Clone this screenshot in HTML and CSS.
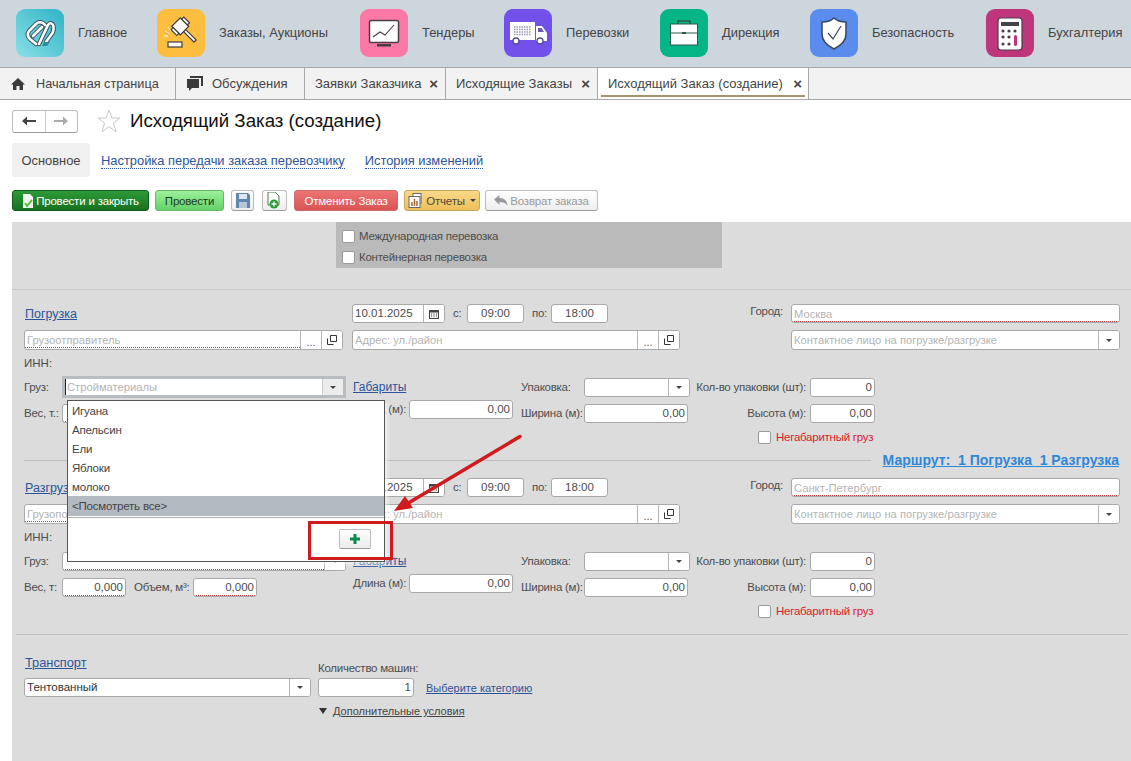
FILE: index.html
```html
<!DOCTYPE html>
<html lang="ru">
<head>
<meta charset="utf-8">
<title>Исходящий Заказ (создание)</title>
<link rel="stylesheet" href="styles.css">
</head>
<body>
<div class="page">
<nav class="apps">
  <a class="app"><svg class="app-ico" viewBox="0 0 48 48"><defs><linearGradient id="g1" x1="0" y1="1" x2="1" y2="0"><stop offset="0" stop-color="#8adfe6"/><stop offset="1" stop-color="#2fb4c6"/></linearGradient></defs><rect width="48" height="48" rx="9" fill="url(#g1)"/><path d="M29 16C26 12 22 13 20 15L13 22C11 25 12 28 14 30L20 35M17 27L26 18M23 35L32 16C34 13 37 14 37.500 18C38 22 37 24 35 26L30 33" fill="none" stroke="#37505c" stroke-width="4.500" stroke-linecap="round"/><path d="M29 16C26 12 22 13 20 15L13 22C11 25 12 28 14 30L20 35M17 27L26 18M23 35L32 16C34 13 37 14 37.500 18C38 22 37 24 35 26L30 33" fill="none" stroke="#fff" stroke-width="2.600" stroke-linecap="round"/><path d="M28 33h6l-3 4h-5z" fill="#2b8c9b"/></svg><span>Главное</span></a>
  <a class="app"><svg class="app-ico" viewBox="0 0 48 48"><rect width="48" height="48" rx="9" fill="#fdbe3f"/><g transform="rotate(-45 24 18)" stroke="#3d3d3d" stroke-width="1.200" fill="#fff"><rect x="22.500" y="23" width="3" height="15"/><rect x="18" y="11" width="12" height="12"/><rect x="15" y="13" width="3" height="8"/><rect x="30" y="13" width="3" height="8"/></g><rect x="11" y="33" width="14" height="5" fill="#fff" stroke="#3d3d3d" stroke-width="1.200"/><path d="M7 27h4M8 22l4 2.500M11 18l2.500 3.500" stroke="#fff" stroke-width="1"/></svg><span>Заказы, Аукционы</span></a>
  <a class="app"><svg class="app-ico" viewBox="0 0 48 48"><rect width="48" height="48" rx="9" fill="#fc78a6"/><rect x="9.500" y="11.500" width="29" height="22" rx="1.500" fill="#fff" stroke="#4b3b47" stroke-width="1.500"/><path d="M13 28l7-5 5 3 9-10" fill="none" stroke="#4b3b47" stroke-width="1.100"/><rect x="17" y="35" width="14" height="2.500" fill="#4b3b47"/></svg><span>Тендеры</span></a>
  <a class="app"><svg class="app-ico" viewBox="0 0 48 48"><rect width="48" height="48" rx="9" fill="#7250ea"/><rect x="6" y="13" width="25" height="18" fill="#fff"/><path d="M32 17h6l5 7v8H32z" fill="#fff"/><path d="M34 19h3.500l2.500 4h-6z" fill="#6a5aa8"/><path d="M10 18h17M10 20.500h17M10 23h17M10 25.500h17" stroke="#9c96b2" stroke-width="1.600" stroke-dasharray="1.500 1"/><circle cx="12" cy="32" r="3" fill="#fff" stroke="#56489a" stroke-width="1.300"/><circle cx="36" cy="32" r="3" fill="#fff" stroke="#56489a" stroke-width="1.300"/></svg><span>Перевозки</span></a>
  <a class="app"><svg class="app-ico" viewBox="0 0 48 48"><rect width="48" height="48" rx="9" fill="#06b585"/><path d="M18 15v-3h12v3" fill="none" stroke="#2d5a4c" stroke-width="1.500"/><rect x="10.500" y="15" width="27" height="21" fill="#fff" stroke="#2d5a4c" stroke-width="1"/><path d="M10.500 24h27" stroke="#2d5a4c"/><rect x="22" y="23" width="4" height="2" fill="#2d5a4c"/></svg><span>Дирекция</span></a>
  <a class="app"><svg class="app-ico" viewBox="0 0 48 48"><rect width="48" height="48" rx="9" fill="#5a8cee"/><path d="M24 9c3 3 8 4 12 4v12c0 8-6 12-12 15-6-3-12-7-12-15V13c4 0 9-1 12-4z" fill="#fff" stroke="#39465e" stroke-width="1.500"/><path d="M18 24l5 6 8-13" fill="none" stroke="#39465e" stroke-width="1.200"/></svg><span>Безопасность</span></a>
  <a class="app"><svg class="app-ico" viewBox="0 0 48 48"><rect width="48" height="48" rx="9" fill="#c0367c"/><rect x="12" y="9" width="24" height="32" rx="3" fill="#fff" stroke="#46424a" stroke-width="1.200"/><rect x="15" y="13" width="18" height="4" fill="#46424a"/><g fill="#46424a"><circle cx="17" cy="22" r="1.600"/><circle cx="23" cy="22" r="1.600"/><circle cx="29" cy="22" r="1.600"/><circle cx="17" cy="28" r="1.600"/><circle cx="23" cy="28" r="1.600"/><circle cx="17" cy="35" r="1.600"/><circle cx="23" cy="35" r="1.600"/></g><rect x="28" y="26" width="3" height="11" rx="1.500" fill="#c0367c"/></svg><span>Бухгалтерия</span></a>
</nav>

<div class="tabs">
  <a class="tab tab-home"><svg class="tab-ico-home" viewBox="0 0 14 12"><path d="M7 0L0 6.500h2V12h3.500V8h3v4H12V6.500h2z" fill="#3a3a3a"/></svg><span>Начальная страница</span></a>
  <a class="tab tab-talk"><svg class="tab-ico-talk" viewBox="0 0 18 16"><path d="M4 0h13v10h-2V2H4z" fill="#3a3a3a"/><path d="M1 3h12v9H6l-3 3v-3H1z" fill="#3a3a3a"/></svg><span>Обсуждения</span></a>
  <a class="tab tab-a"><span>Заявки Заказчика</span><b class="x">×</b></a>
  <a class="tab tab-b"><span>Исходящие Заказы</span><b class="x">×</b></a>
  <a class="tab tab-c"><span>Исходящий Заказ (создание)</span><b class="x">×</b></a>
</div>

<header class="head">
  <div class="navbtns">
    <span class="navbtn"><svg viewBox="0 0 14 10" width="14" height="10"><path d="M0 5l5-4.500V4h9v2H5v3.500z" fill="#444"/></svg></span>
    <span class="navbtn"><svg viewBox="0 0 14 10" width="14" height="10"><path d="M14 5L9 .5V4H0v2h9v3.500z" fill="#aaa"/></svg></span>
  </div>
  <svg class="star" viewBox="0 0 24 24"><path d="M12 1l3 8h8l-6.500 5 2.500 9-7-5.500L5 23l2.500-9L1 9h8z" fill="#fff" stroke="#c8c8c8"/></svg>
  <h1 class="title">Исходящий Заказ (создание)</h1>
</header>

<div class="subtabs">
  <span class="subtab-on">Основное</span>
  <a class="subtab subtab-1">Настройка передачи заказа перевозчику</a>
  <a class="subtab subtab-2">История изменений</a>
</div>

<div class="toolbar">
  <button class="btn btn-dark w-close"><svg width="12" height="14" viewBox="0 0 12 14"><path d="M1 0h7l3 3v11H1z" fill="#f4f4f4"/><path d="M3 9l2 3 5-6" stroke="#5fbf3f" stroke-width="2" fill="none"/></svg>Провести и закрыть</button>
  <button class="btn btn-green w-post">Провести</button>
  <button class="btn btn-plain w-save"><svg width="14" height="15" viewBox="0 0 14 15"><path d="M0 0h12l2 2v13H0z" fill="#5f86ad"/><rect x="3" y="1" width="8" height="5" fill="#dfe8f0"/><rect x="3" y="9" width="8" height="6" fill="#b7c6d4"/></svg></button>
  <button class="btn btn-plain w-new"><svg width="15" height="17" viewBox="0 0 15 17"><path d="M1 0h7l4 4v9H1z" fill="#fff" stroke="#4d7d4d"/><circle cx="7" cy="12" r="4.500" fill="#2e9a3e"/><path d="M7 9.500v5M4.500 12h5" stroke="#fff" stroke-width="1.300"/></svg></button>
  <button class="btn btn-red w-cancel">Отменить Заказ</button>
  <button class="btn btn-orange w-rep"><svg width="17" height="15" viewBox="0 0 17 15"><rect x="5" y="0.500" width="8" height="10" fill="#fff" stroke="#666"/><rect x="1" y="3.500" width="11" height="11" fill="#fff" stroke="#666"/><path d="M4 13V9M6.500 13V6M9 13V8" stroke="#a8642a" stroke-width="1.500"/></svg>Отчеты<i class="caret"></i></button>
  <button class="btn btn-off w-back"><svg width="14" height="11" viewBox="0 0 14 11"><path d="M0 4.500L5.500 0v3c5 0 8 3 8 8-1.500-3-4-4-8-4v3z" fill="#9a9a9a"/></svg>Возврат заказа</button>
</div>

<main class="form">
  <div class="flags">
    <label class="check"><i class="box"></i>Международная перевозка</label>
    <label class="check"><i class="box"></i>Контейнерная перевозка</label>
  </div>
  <hr class="rule rule-top">

  <section class="stop">
    <div class="r-date">
      <a class="link">Погрузка</a>
      <div class="field"><span class="val">10.01.2025</span><span class="fbtn"><svg class="cal" viewBox="0 0 10 10"><path d="M0 1h10v9H0z" fill="#444"/><path d="M1 3.500h8V9H1z" fill="#eee"/><path d="M2 5h1M4.500 5h1M7 5h1M2 7h1M4.500 7h1M7 7h1" stroke="#444"/></svg></span></div>
      <span class="lab lab-c">с:</span>
      <div class="field"><span class="val center">09:00</span></div>
      <span class="lab lab-c">по:</span>
      <div class="field"><span class="val center">18:00</span></div>
      <span class="lab lab-city">Город:</span>
      <div class="field"><span class="val ph req">Москва</span></div>
    </div>
    <div class="r-party">
      <div class="field"><span class="val ph req">Грузоотправитель</span><span class="fbtn dots">...</span><span class="fbtn"><svg class="open" viewBox="0 0 10 10"><path d="M3.500.5h6v6h-6zM.5 3.500v6h6" fill="none" stroke="#333"/></svg></span></div>
      <div class="field"><span class="val ph">Адрес: ул./район</span><span class="fbtn dots">...</span><span class="fbtn"><svg class="open" viewBox="0 0 10 10"><path d="M3.500.5h6v6h-6zM.5 3.500v6h6" fill="none" stroke="#333"/></svg></span></div>
      <div class="field contact"><span class="val ph">Контактное лицо на погрузке/разгрузке</span><span class="fbtn"><i class="caret"></i></span></div>
    </div>
    <div class="r-inn">ИНН:</div>
    <div class="cargo">
      <div class="c-left">
        <div class="c-load"><span class="lab">Груз:</span><div class="field focus"><span class="val ph req">Стройматериалы</span><span class="fbtn"><i class="caret"></i></span></div></div>
        <div class="c-weight"><span class="lab">Вес, т.:</span><div class="field"><span class="val right req">0,000</span></div><span class="lab lab-vol">Объем, м³:</span><div class="field"><span class="val right req">0,000</span></div></div>
      </div>
      <div class="c-mid">
        <a class="link">Габариты</a>
        <div class="c-len"><span class="lab">Длина (м):</span><div class="field"><span class="val right">0,00</span></div></div>
      </div>
      <div class="c-right">
        <span class="lab">Упаковка:</span><div class="field"><span class="val"></span><span class="fbtn"><i class="caret"></i></span></div><span class="lab lab-r">Кол-во упаковки (шт):</span><div class="field"><span class="val right">0</span></div>
        <span class="lab">Ширина (м):</span><div class="field narrow"><span class="val right">0,00</span></div><span class="lab lab-r">Высота (м):</span><div class="field"><span class="val right">0,00</span></div>
      </div>
    </div>
    <label class="check over"><i class="box"></i>Негабаритный груз</label>
  </section>

  <div class="route"><hr class="rule"><a class="route-link">Маршрут:&nbsp; 1 Погрузка&nbsp; 1 Разгрузка</a></div>

  <section class="stop">
    <div class="r-date">
      <a class="link">Разгрузка</a>
      <div class="field"><span class="val">10.01.2025</span><span class="fbtn"><svg class="cal" viewBox="0 0 10 10"><path d="M0 1h10v9H0z" fill="#444"/><path d="M1 3.500h8V9H1z" fill="#eee"/><path d="M2 5h1M4.500 5h1M7 5h1M2 7h1M4.500 7h1M7 7h1" stroke="#444"/></svg></span></div>
      <span class="lab lab-c">с:</span>
      <div class="field"><span class="val center">09:00</span></div>
      <span class="lab lab-c">по:</span>
      <div class="field"><span class="val center">18:00</span></div>
      <span class="lab lab-city">Город:</span>
      <div class="field"><span class="val ph req">Санкт-Петербург</span></div>
    </div>
    <div class="r-party">
      <div class="field"><span class="val ph req">Грузополучатель</span><span class="fbtn dots">...</span><span class="fbtn"><svg class="open" viewBox="0 0 10 10"><path d="M3.500.5h6v6h-6zM.5 3.500v6h6" fill="none" stroke="#333"/></svg></span></div>
      <div class="field"><span class="val ph">Адрес: ул./район</span><span class="fbtn dots">...</span><span class="fbtn"><svg class="open" viewBox="0 0 10 10"><path d="M3.500.5h6v6h-6zM.5 3.500v6h6" fill="none" stroke="#333"/></svg></span></div>
      <div class="field contact"><span class="val ph">Контактное лицо на погрузке/разгрузке</span><span class="fbtn"><i class="caret"></i></span></div>
    </div>
    <div class="r-inn">ИНН:</div>
    <div class="cargo">
      <div class="c-left">
        <div class="c-load"><span class="lab">Груз:</span><div class="field"><span class="val ph req"></span><span class="fbtn"><i class="caret"></i></span></div></div>
        <div class="c-weight"><span class="lab">Вес, т:</span><div class="field"><span class="val right req">0,000</span></div><span class="lab lab-vol">Объем, м³:</span><div class="field"><span class="val right req">0,000</span></div></div>
      </div>
      <div class="c-mid">
        <a class="link">Габариты</a>
        <div class="c-len"><span class="lab">Длина (м):</span><div class="field"><span class="val right">0,00</span></div></div>
      </div>
      <div class="c-right">
        <span class="lab">Упаковка:</span><div class="field"><span class="val"></span><span class="fbtn"><i class="caret"></i></span></div><span class="lab lab-r">Кол-во упаковки (шт):</span><div class="field"><span class="val right">0</span></div>
        <span class="lab">Ширина (м):</span><div class="field narrow"><span class="val right">0,00</span></div><span class="lab lab-r">Высота (м):</span><div class="field"><span class="val right">0,00</span></div>
      </div>
    </div>
    <label class="check over"><i class="box"></i>Негабаритный груз</label>
  </section>

  <hr class="rule rule-end">

  <section class="transport">
    <div class="t-left">
      <a class="link">Транспорт</a>
      <div class="field"><span class="val dark">Тентованный</span><span class="fbtn"><i class="caret"></i></span></div>
    </div>
    <div class="t-right">
      <span class="lab t-label">Количество машин:</span>
      <div class="t-count"><div class="field"><span class="val right">1</span></div><a class="link link-s">Выберите категорию</a></div>
      <a class="more"><i class="tri"></i><span>Дополнительные условия</span></a>
    </div>
  </section>
</main>

<div class="menu">
  <ul class="menu-list">
    <li>Игуана</li><li>Апельсин</li><li>Ели</li><li>Яблоки</li><li>молоко</li><li class="sel">&lt;Посмотреть все&gt;</li>
  </ul>
  <div class="menu-foot"><button class="plus"><svg width="12" height="12" viewBox="0 0 12 12"><path d="M4.500 1h3v3.500H11v3H7.500V11h-3V7.500H1v-3h3.500z" fill="#0d8a4b"/></svg></button></div>
</div>
<div class="mark"></div>
<svg class="arrow" viewBox="0 0 145 90"><path d="M135 5.500L20 74" stroke="#cf1b1e" stroke-width="3.500" fill="none" stroke-linecap="round"/><path d="M9 80l11-15 8 12z" fill="#cf1b1e"/></svg>
</div>
</body>
</html>
```
FILE: styles.css
```css
* { box-sizing: border-box; }
html, body { margin: 0; padding: 0; }
body { font-family: "Liberation Sans", Arial, sans-serif; font-size: 12px; color: #4d4d4d; background: #fff; }
.page { position: relative; width: 1131px; height: 761px; overflow: hidden; }

/* top application bar */
.apps { display: grid; grid-template-columns: 141px 203px 144px 156px 150px 176px auto; height: 68px; padding: 9px 0 0 16px; background: #cdd5dd; border-bottom: 1px solid #a9a9a9; }
.app { display: flex; align-items: flex-start; gap: 14px; }
.app span { font-size: 12.900px; line-height: 48px; color: #444; white-space: nowrap; }
.app-ico { width: 48px; height: 48px; flex: none; }

/* open-window tabs */
.tabs { display: flex; height: 32px; background: #f2f2f2; border-bottom: 1px solid #a9a9a9; }
.tab { display: flex; align-items: center; position: relative; font-size: 13px; color: #444; border-right: 1px solid #a9a9a9; white-space: nowrap; height: 31px; }
.tab-home { width: 176px; padding-left: 11px; gap: 11px; font-size: 12.700px; }
.tab-talk { width: 129px; padding-left: 10px; gap: 8px; }
.tab-a { width: 141px; padding-left: 10px; justify-content: space-between; padding-right: 7px; }
.tab-b { width: 152px; padding-left: 10px; justify-content: space-between; padding-right: 7px; }
.tab-c { width: 211px; padding-left: 10px; justify-content: space-between; padding-right: 6px; background: #fff; height: 32px; margin-bottom: -1px; border-bottom: 1px solid #a9a9a9; }
.tab-c::after { content: ""; position: absolute; left: 3px; right: 3px; bottom: 2px; height: 2px; background: #a3946b; }
.tab-ico-home { width: 14px; height: 12px; flex: none; }
.tab-ico-talk { width: 18px; height: 16px; flex: none; }
.x { font-size: 15px; line-height: 1; color: #444; }

/* document header */
.head { display: flex; align-items: center; height: 42px; padding: 0 0 0 12px; }
.navbtns { display: flex; width: 66px; height: 23px; border: 1px solid #bcbcbc; border-bottom-color: #999; border-radius: 3px; background: #fff; }
.navbtn { flex: 1; display: flex; align-items: center; justify-content: center; }
.navbtn + .navbtn { border-left: 1px solid #ccc; }
.star { width: 24px; height: 24px; margin-left: 19px; }
.title { margin: 0 0 0 9px; font-size: 18.700px; font-weight: 400; color: #111; line-height: 24px; white-space: nowrap; }

.subtabs { display: flex; align-items: center; height: 34px; margin: 1px 0 0 12px; }
.subtab-on { width: 78px; height: 34px; line-height: 35px; text-align: center; background: #f0f0f0; border-radius: 3px; font-size: 12.900px; color: #444; }
.subtab { font-size: 12.900px; color: #2b559b; border-bottom: 1px dotted #2b559b; line-height: 14px; margin-top: 2px; }
.subtab-1 { margin-left: 11px; }
.subtab-2 { margin-left: 20px; }

/* command bar */
.toolbar { display: flex; align-items: center; height: 21px; margin: 13px 0 11px 12px; }
.btn { display: flex; align-items: center; justify-content: center; gap: 2px; height: 21px; padding: 0; border: 1px solid #bdbdbd; border-bottom-color: #9c9c9c; border-radius: 3px; font-family: inherit; font-size: 11.500px; letter-spacing: -0.2px; background: linear-gradient(#fff, #eee); color: #444; white-space: nowrap; }
.w-close { width: 137px; }
.w-post { width: 69px; margin-left: 6px; }
.w-save { width: 23px; margin-left: 7px; }
.w-new { width: 25px; margin-left: 8px; }
.w-cancel { width: 104px; margin-left: 7px; }
.w-rep { width: 76px; margin-left: 6px; gap: 1px; }
.w-back { width: 113px; margin-left: 5px; }
.btn-dark { background: linear-gradient(#2e9a38, #17711f); border-color: #125c1a; color: #fff; }
.btn-green { background: linear-gradient(#9df09a, #63d268); border-color: #63b868; color: #1e3a1e; }
.btn-red { background: linear-gradient(#ee7373, #d95555); border-color: #cf6a6a; color: #fff; }
.btn-orange { background: linear-gradient(#f8d98a, #edc05a); border-color: #c7a760; color: #4a4a3a; }
.btn-off { color: #9a9a9a; }
.caret { display: inline-block; width: 0; height: 0; border-left: 3px solid transparent; border-right: 3px solid transparent; border-top: 3px solid #444; }
.w-rep .caret { margin-left: 4px; }

/* form surface */
.form { margin-left: 12px; height: 539px; background: #dcdcdc; }
.flags { display: flex; flex-direction: column; gap: 3px; width: 386px; height: 46px; margin-left: 324px; padding: 5px 0 0 6px; background: #bababa; }
.check { display: flex; align-items: center; gap: 4px; height: 18px; font-size: 11.500px; letter-spacing: -0.25px; color: #4d4d4d; }
.box { width: 13px; height: 13px; flex: none; background: #fff; border: 1px solid #999; border-radius: 2px; }
.rule { margin: 0; border: 0; height: 1px; background: #bdbdbd; }
.rule-top { margin-top: 21px; background: #c8c8c8; }

.stop { padding-left: 12px; }
.stop:first-of-type { margin-top: 14px; }
.lab { font-size: 11.500px; letter-spacing: -0.25px; color: #4d4d4d; white-space: nowrap; line-height: 18px; }
.link { font-size: 12px; color: #2b559b; text-decoration: underline; white-space: nowrap; }

.field { display: flex; height: 19px; background: #fff; border: 1px solid #a9a9a9; border-radius: 3px; overflow: hidden; min-width: 0; }
.val { flex: 1; min-width: 0; padding: 0 2px; font-size: 11.500px; line-height: 17px; color: #4d4d4d; white-space: nowrap; overflow: hidden; }
.val.ph { color: #b4b4b4; font-size: 11.200px; line-height: 18px; }
.val.dark { color: #333; }
.val.center { text-align: center; }
.val.right { text-align: right; }
.val.req { background: linear-gradient(90deg, #b83c3c 50%, transparent 50%) 2px 16px / 2px 1px repeat-x; }
.fbtn { display: flex; align-items: center; justify-content: center; flex: none; width: 21px; border-left: 1px solid #b4b4b4; background: #fff; }
.dots { font-size: 11px; color: #555; padding-top: 3px; }
.cal { width: 10px; height: 10px; }
.open { width: 10px; height: 10px; }
.field.focus { height: 22px; border: 3px solid #b9bdc2; border-radius: 0; }
.field.focus .val { line-height: 16px; box-shadow: inset 1px 0 0 #222; }
.field.focus .fbtn { background: #ececec; border-left-color: #ccc; }

.r-date { display: grid; grid-template-columns: 328px 93px 22px 57px 27px 57px 183px 329px; height: 20px; align-items: start; }
.r-date .link { line-height: 20px; font-size: 12.500px; padding-left: 1px; }
.lab-c { padding-left: 8px; }
.lab-city { text-align: right; padding-right: 8px; line-height: 14px; }
.r-party { display: grid; grid-template-columns: 319px 328px 93px 329px; column-gap: 9px; margin-top: 6px; height: 20px; }
.r-party .field { height: 20px; }
.r-party .contact { grid-column: 4; }
.r-inn { margin-top: 6px; height: 14px; line-height: 14px; font-size: 11.500px; }

.cargo { display: flex; margin-top: 6px; height: 46px; }
.c-left { width: 329px; flex: none; }
.c-load { display: grid; grid-template-columns: 38px 284px; height: 22px; align-items: center; }
.c-weight { display: grid; grid-template-columns: 38px 64px 67px 64px; margin-top: 6px; height: 19px; }
.lab-vol { padding-left: 8px; }
.c-mid { width: 168px; flex: none; padding-top: 2px; }
.c-mid .link { display: block; line-height: 18px; }
.c-len { display: grid; grid-template-columns: 56px 104px; margin-top: 4px; }
.c-right { display: grid; grid-template-columns: 63px 106px 120px 65px; grid-auto-rows: 19px; row-gap: 7px; padding-top: 2px; }
.narrow { width: 104px; }
.lab-r { text-align: right; padding-right: 4px; }

.over { gap: 5px; margin: 6px 0 0 734px; color: #d8202c; }

.route { display: flex; align-items: center; height: 18px; margin: 5px 0 9px 12px; padding-right: 12px; }
.route .rule { flex: 1; margin-right: 12px; }
.route-link { font-size: 14px; font-weight: 700; color: #2f87d8; text-decoration: underline; white-space: nowrap; }

.rule-end { margin: 14px 3px 0 4px; }

.transport { display: flex; padding: 20px 0 0 12px; }
.t-left { width: 287px; flex: none; }
.t-left .link { display: block; line-height: 16px; font-size: 12.800px; padding-left: 1px; }
.t-left .field { margin-top: 7px; }
.t-right { margin-left: 7px; padding-top: 6px; }
.t-label { display: block; line-height: 14px; }
.t-count { display: flex; align-items: center; margin-top: 3px; }
.t-count .field { width: 96px; }
.link-s { margin-left: 12px; font-size: 11px; }
.more { display: flex; align-items: center; gap: 6px; margin-top: 8px; padding-left: 1px; font-size: 11px; color: #444; }
.more span { text-decoration: underline; }
.tri { width: 0; height: 0; border-left: 4.500px solid transparent; border-right: 4.500px solid transparent; border-top: 6px solid #333; }

/* open drop-down over the form */
.menu { position: absolute; left: 67px; top: 400px; width: 318px; height: 162px; background: #fff; border: 1px solid #555; box-shadow: 3px 3px 3px rgba(255, 255, 255, 0.5); }
.menu-list { margin: 0; padding: 0; list-style: none; border-bottom: 1px solid #b0b0b0; height: 117px; }
.menu-list li { height: 19px; line-height: 20px; padding-left: 4px; font-size: 11.500px; letter-spacing: -0.2px; color: #444; }
.menu-list .sel { background: #b4bac2; height: 20px; line-height: 20px; }
.menu-foot { display: flex; justify-content: flex-end; padding: 11px 13px 0 0; }
.plus { display: flex; align-items: center; justify-content: center; width: 32px; height: 20px; padding: 0; background: linear-gradient(#fff, #ececec); border: 1px solid #bcbcbc; border-bottom-color: #999; border-radius: 2px; }

/* annotation drawn on the screenshot */
.mark { position: absolute; left: 308px; top: 521px; width: 85px; height: 39px; border: 3px solid #cf1b1e; }
.arrow { position: absolute; left: 385px; top: 431px; width: 145px; height: 90px; }
```
